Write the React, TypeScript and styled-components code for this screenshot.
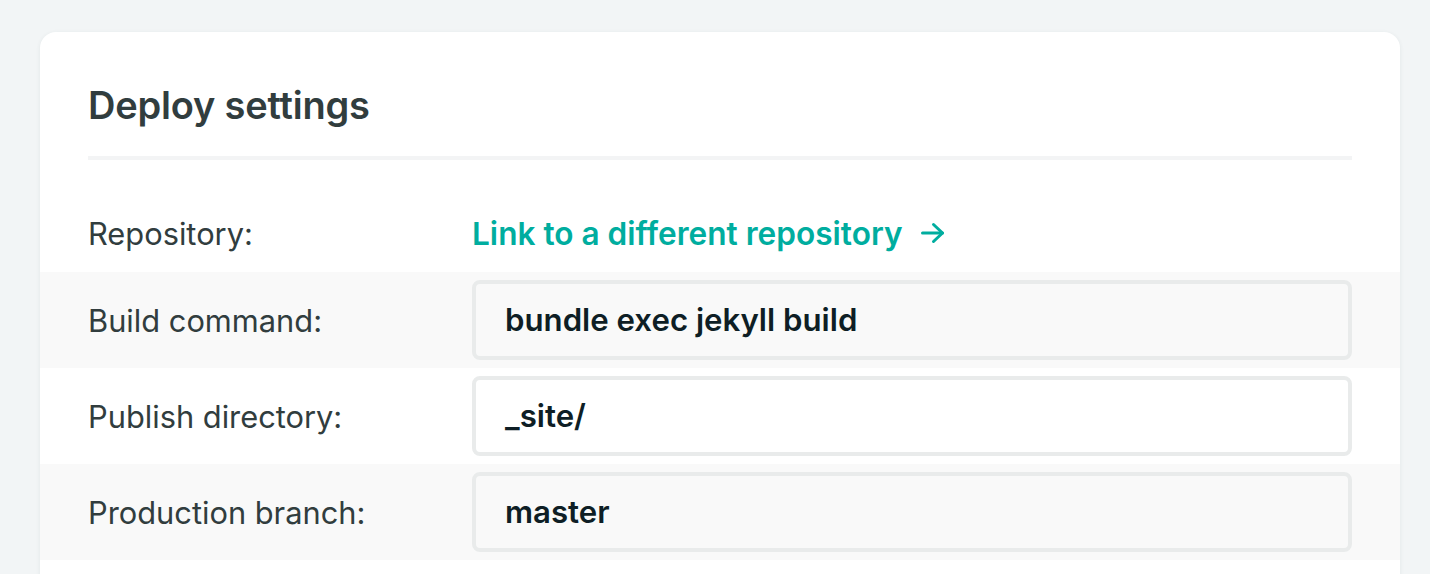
import React from "react";
import styled, { createGlobalStyle } from "styled-components";

const Global = createGlobalStyle`
  html, body { margin: 0; padding: 0; background: #f2f5f6; }
  body { font-family: Inter, "Noto Sans", sans-serif; -webkit-font-smoothing: antialiased; }
`;

const Page = styled.div`
  padding: 32px 30px 0 40px;
`;

const Card = styled.section`
  background: #ffffff;
  border-radius: 16px;
  box-shadow: 0 1px 4px rgba(40, 60, 70, 0.08);
  padding: 48px 0 48px;
`;

const Header = styled.div`
  padding: 0 48px;
`;

const Title = styled.h2`
  margin: 0;
  font-size: 38px;
  line-height: 50px;
  font-weight: 600;
  color: #313d3e;
  letter-spacing: -0.2px;
`;

const Divider = styled.div`
  height: 4px;
  background: #f3f4f5;
  margin-top: 26px;
`;

const Rows = styled.div`
  margin-top: 34px;
`;

const Row = styled.div<{ $striped?: boolean; $tall?: boolean }>`
  display: grid;
  grid-template-columns: 384px 1fr;
  align-items: center;
  padding: 0 48px;
  height: ${(p) => (p.$tall ? "96px" : "78px")};
  background: ${(p) => (p.$striped ? "#f9f9f9" : "transparent")};
`;

const Label = styled.div`
  font-size: 30.8px;
  color: #313d3e;
  font-weight: 400;
`;

const Link = styled.a`
  display: inline-flex;
  align-items: center;
  gap: 18px;
  font-size: 31.6px;
  font-weight: 600;
  color: #00ad9f;
  text-decoration: none;
`;

const Input = styled.div`
  height: 80px;
  box-sizing: border-box;
  border: 4px solid #e9ebeb;
  border-radius: 8px;
  display: flex;
  align-items: center;
  padding-left: 29px;
  font-size: 31.2px;
  font-weight: 600;
  color: #0e1e25;
`;

const Arrow = () => (
  <svg width="24" height="24" viewBox="0 0 24 24" fill="none" stroke="#00ad9f" strokeWidth="3" strokeLinecap="round" strokeLinejoin="round">
    <path d="M1.5 12h20" />
    <path d="M12.5 3.5l9 8.5-9 8.5" />
  </svg>
);

const fields = [
  { label: "Build command:", value: "bundle exec jekyll build" },
  { label: "Publish directory:", value: "_site/" },
  { label: "Production branch:", value: "master" },
];

export default function App() {
  return (
    <>
      <Global />
      <Page>
        <Card>
          <Header>
            <Title>Deploy settings</Title>
            <Divider />
          </Header>
          <Rows>
            <Row>
              <Label>Repository:</Label>
              <div>
                <Link href="#">
                  Link to a different repository <Arrow />
                </Link>
              </div>
            </Row>
            {fields.map((f, i) => (
              <Row key={f.label} $tall $striped={i % 2 === 0}>
                <Label>{f.label}</Label>
                <Input>{f.value}</Input>
              </Row>
            ))}
          </Rows>
        </Card>
      </Page>
    </>
  );
}
